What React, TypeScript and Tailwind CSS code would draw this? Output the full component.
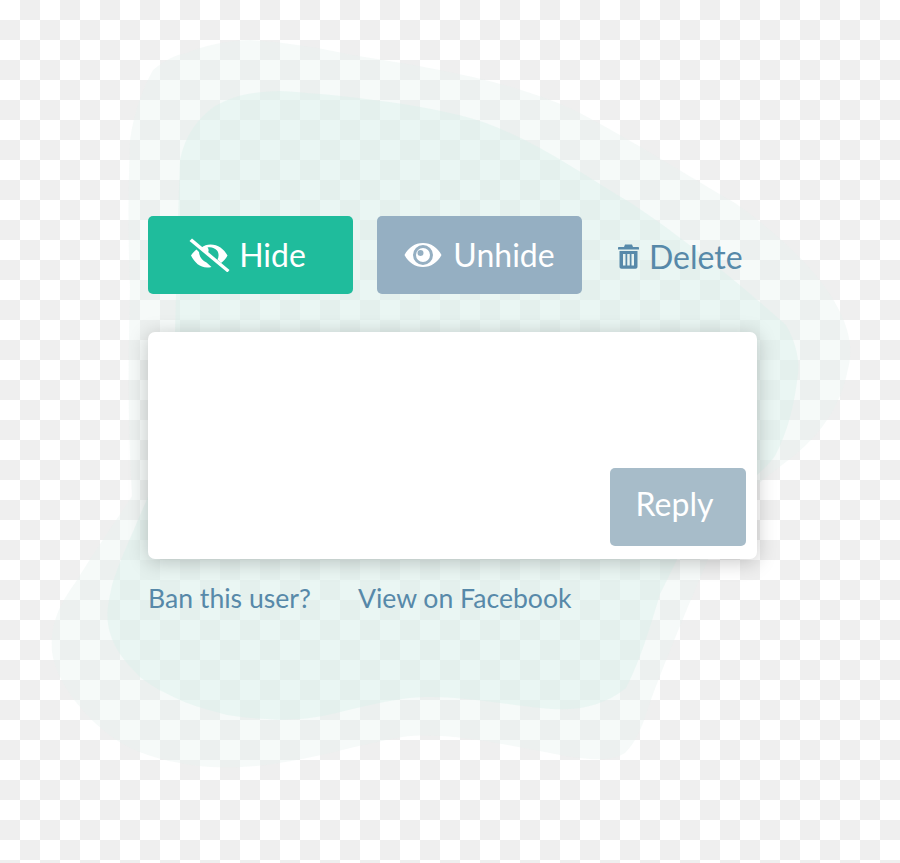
import React from "react";

const EyeIcon: React.FC = () => (
  <svg width="38" height="26" viewBox="0 0 38 26" fill="#fff" aria-hidden="true">
    <path
      fillRule="evenodd"
      d="M0.5 13C4.5 5.5 11 1 19 1s14.500 4.500 18.500 12C33.500 20.500 27 25 19 25S4.500 20.500 0.500 13ZM19 3A10 10 0 1 0 19 23A10 10 0 1 0 19 3Z"
    />
    <path
      fillRule="evenodd"
      d="M19 6A7 7 0 1 1 19 20A7 7 0 1 1 19 6ZM16.500 8A3 3 0 1 0 16.500 14A3 3 0 1 0 16.500 8Z"
    />
  </svg>
);

const EyeSlashIcon: React.FC = () => (
  <svg width="41" height="34" viewBox="0 0 40 34" fill="#fff" aria-hidden="true">
    <path d="M1.500 17.500C3 15 5 13 7 11.500L9.500 14C9.800 18.500 12.500 22.500 17 24.500L22 29C20.500 29.400 19 29.500 17.500 29.500C10.500 29.500 5 24.500 1.500 17.500Z" />
    <path d="M12 9.500C14.500 7.800 17.500 6.500 21 6.500C28.500 6.500 34.500 11 38 17.500C36.500 20.500 34 23 31.500 25L28 21.500C29.500 18.500 29.500 15 27.500 12.500C25.500 10 21.500 8.500 18 9.500C19.500 11 19.500 13.500 18 15L12 9.500Z" />
    <path d="M0 3L2.500 0.500L40 32L38 34.500Z" />
  </svg>
);

const TrashIcon: React.FC = () => (
  <svg width="21" height="25" viewBox="0 0 21 25" fill="#5789a9" aria-hidden="true">
    <path d="M7 0.500H14L15 3H20C20.600 3 21 3.400 21 4V5.500H0V4C0 3.400 0.400 3 1 3H6Z" />
    <path
      fillRule="evenodd"
      d="M1.500 7H19.500V22.500C19.500 23.800 18.600 24.800 17.500 24.800H3.500C2.400 24.800 1.500 23.800 1.500 22.500ZM5 10V21.500H7.500V10ZM9.250 10V21.500H11.750V10ZM13.500 10V21.500H16V10Z"
    />
  </svg>
);

const Blobs: React.FC = () => (
  <svg className="absolute inset-0" width="900" height="863" viewBox="0 0 900 863" aria-hidden="true">
    <path
      fill="#e7f2ef"
      fillOpacity="0.375"
      d="M130 140C134 112 143 88 153 70C165 60 175 55 187 53C205 45 225 41 250 40C290 43 320 48 352 55C440 69 510 81 574 110C630 139 690 177 735 203C780 235 820 273 838 308C850 331 853 350 848 369C842 398 830 422 805 446C785 465 760 479 746 496C725 522 712 551 700 578C685 614 665 661 649 705C642 729 635 743 625 753C610 762 590 760 560 755C510 746 450 731 402 737C350 746 295 765 241 767C215 768 200 767 180 763C150 758 125 748 107 733C80 712 56 680 52 652C50 623 60 604 75 583C95 551 115 522 132 496C128 431 128 364 130 288C128 240 128 200 130 140Z"
    />
    <path
      fill="#daf0ec"
      fillOpacity="0.4"
      d="M180 160C185 135 198 118 215 106C235 95 250 92 280 91C330 94 400 101 459 115C520 129 580 173 631 203C680 235 745 288 786 325C795 340 800 360 798 374C794 407 788 431 775 456C750 489 715 498 695 527C680 551 670 575 660 594C650 628 640 661 626 688C605 705 580 711 551 709C500 705 450 692 402 699C360 705 330 717 300 719C285 720 275 720 267 719C250 718 240 717 227 715C210 710 195 707 180 700C165 693 152 687 140 677C125 662 115 650 110 633C105 615 108 605 112 585C120 560 132 534 132 534C145 503 160 470 172 440C175 345 177 240 180 160Z"
    />
  </svg>
);

export default function App() {
  return (
    <div
      className="relative w-[900px] h-[863px] overflow-hidden font-['Lato',sans-serif] bg-[conic-gradient(#efefef_25%,#ffffff_0_50%,#efefef_0_75%,#ffffff_0)] bg-[length:40px_40px]"
    >
      <Blobs />
      <div className="relative flex flex-col pt-[216px] pl-[148px]">
        <div className="flex items-center gap-6">
          <button className="flex items-center justify-center gap-[9px] w-[205px] h-[78px] pr-[6px] rounded-[5px] bg-[#1fbc9c] text-white text-[32px]">
            <EyeSlashIcon />
            Hide
          </button>
          <button className="flex items-center justify-center gap-[11px] w-[205px] h-[78px] rounded-[5px] bg-[#95afc2] text-white text-[32px]">
            <EyeIcon />
            Unhide
          </button>
          <a className="flex items-center gap-[10px] ml-3 mt-[3px] text-[32px] text-[#5789a9]">
            <TrashIcon />
            Delete
          </a>
        </div>

        <div className="flex items-end justify-end w-[609px] h-[227px] mt-[38px] pr-[11px] pb-[13px] rounded-[7px] bg-white shadow-[0_3px_20px_rgba(0,0,0,0.22)]">
          <button className="w-[136px] h-[78px] pr-[7px] pb-[6px] rounded-[5px] bg-[#a7bcc9] text-white text-[32px]">Reply</button>
        </div>

        <div className="flex gap-[47px] mt-[21px] text-[26.6px] leading-[36px] text-[#5789a9]">
          <a>Ban this user?</a>
          <a>View on Facebook</a>
        </div>
      </div>
    </div>
  );
}
